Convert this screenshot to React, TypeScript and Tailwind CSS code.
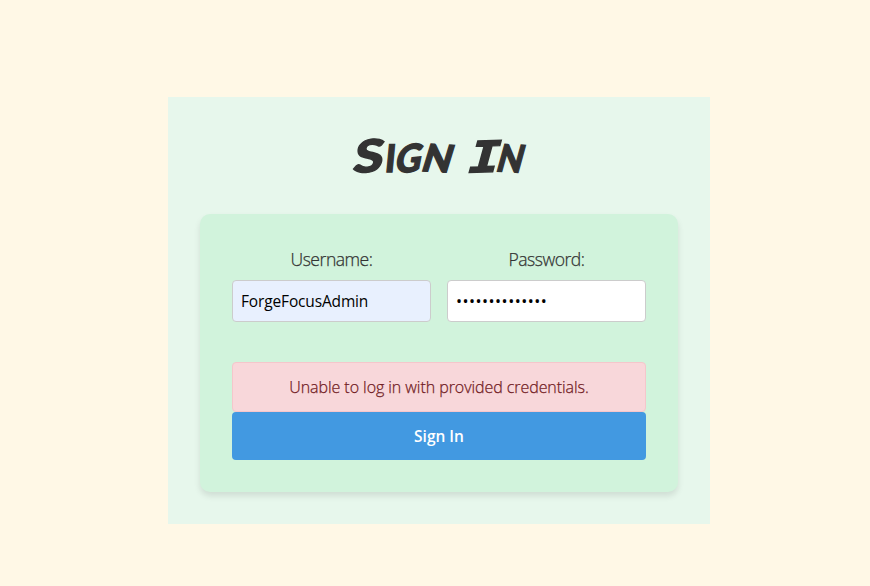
const letter = "inline-flex justify-center";

export default function App() {
  return (
    <main className="h-[586px] w-full overflow-hidden bg-[#fff8e6] pt-[97px] font-['Open_Sans','Noto_Sans',sans-serif] text-[#333]">
      <section className="ml-[168px] h-[427px] w-[542px] bg-[#e7f7ec] px-8 pt-7">
        <h1 aria-label="Sign In" className="flex h-[89px] items-baseline justify-center font-['Lato',sans-serif] text-[38px] leading-[61px] font-black text-[#333] [-webkit-text-stroke:1.3px_#333]">
          <span className={`${letter} w-[32px] text-[45px]`}><span className="-skew-x-[10deg] -rotate-3 scale-x-120">S</span></span>
          <span className={`${letter} w-[12px]`}><span className="-skew-x-[6deg] scale-x-90">I</span></span>
          <span className={`${letter} w-[26px]`}><span className="-skew-x-[18deg] -rotate-6 scale-x-95">G</span></span>
          <span className={`${letter} mr-[17px] w-[31px]`}><span className="-skew-x-[14deg] rotate-3">N</span></span>
          <span className={`${letter} w-[28px] font-['DejaVu_Sans_Mono',monospace] text-[43px]`}><span className="-skew-x-[14deg] -rotate-2 scale-x-125">I</span></span>
          <span className={`${letter} w-[26px]`}><span className="-skew-x-[14deg] rotate-3 scale-x-88">N</span></span>
        </h1>
        <form className="h-[278px] w-[478px] rounded-[10px] bg-[#d1f3dc] p-8 shadow-[0_4px_6px_rgba(0,0,0,0.1)]" onSubmit={(e) => e.preventDefault()}>
          <div className="flex gap-4">
            <label className="flex w-[199px] flex-col text-center text-[17.6px] leading-[27px] font-light">
              <span className="mb-[7px] tracking-[-0.5px] [-webkit-text-stroke:0.25px_#333]">Username:</span>
              <input className="h-[42px] rounded border border-[#ccc] bg-[#e8f0fe] px-2 text-[15.5px] font-normal tracking-[-0.15px] text-black outline-none" defaultValue="ForgeFocusAdmin" />
            </label>
            <label className="flex w-[199px] flex-col text-center text-[17.6px] leading-[27px] font-light">
              <span className="mb-[7px] tracking-[-0.5px] [-webkit-text-stroke:0.25px_#333]">Password:</span>
              <input type="password" className="h-[42px] rounded border border-[#ccc] bg-white px-2 text-[16px] font-normal tracking-[0.5px] text-black outline-none" defaultValue="12345678901234" />
            </label>
          </div>
          <div className="mt-10 flex h-[50px] items-center justify-center rounded border border-[#f5c6cb] bg-[#f8d7da] text-[16px] font-light tracking-[-0.06px] text-[#721c24] [-webkit-text-stroke:0.25px_#721c24]">
            Unable to log in with provided credentials.
          </div>
          <button className="block h-12 w-full rounded bg-[#4299e1] pt-px text-[15.5px] font-semibold text-white">Sign In</button>
        </form>
      </section>
    </main>
  );
}
